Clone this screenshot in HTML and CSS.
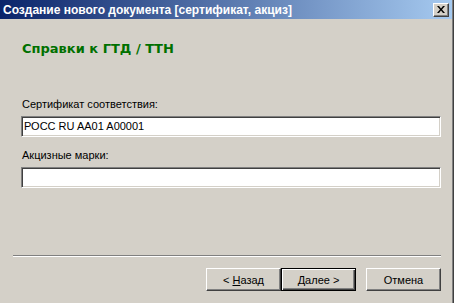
FILE: index.html
```html
<!DOCTYPE html>
<html lang="ru">
<head>
  <meta charset="UTF-8">
  <title>Создание нового документа</title>
  <link rel="stylesheet" href="styles.css">
</head>
<body>
  <!-- dialog window -->
  <div class="window">
    <div class="titlebar">
      <span class="title">Создание нового документа [сертификат, акциз]</span>
      <button class="close-btn" aria-label="Закрыть">
        <svg width="8" height="7" viewBox="0 0 8 7">
          <path d="M0 0h2l2 2.5 2-2.5h2l-3 3.5 3 3.5h-2l-2-2.5-2 2.5h-2l3-3.5z" fill="#000"/>
        </svg>
      </button>
    </div>

    <div class="content">
      <h1 class="page-title">Справки к ГТД / ТТН</h1>

      <div class="field">
        <label class="field-label">Сертификат соответствия:</label>
        <div class="text-input">РОСС RU AA01 A00001</div>
      </div>

      <div class="field">
        <label class="field-label">Акцизные марки:</label>
        <div class="text-input"></div>
      </div>
    </div>

    <!-- wizard buttons -->
    <div class="footer">
      <div class="separator"></div>
      <div class="buttons">
        <button class="btn">&lt; <u>Н</u>азад</button>
        <button class="btn default"><u>Д</u>алее &gt;</button>
        <button class="btn cancel">Отмена</button>
      </div>
    </div>
  </div>
</body>
</html>
```

FILE: styles.css
```css
body {
  margin: 0;
  background: #d4d0c8;
  font-family: 'Liberation Sans', Arial, sans-serif;
  font-size: 11px;
  color: #000;
}

.window {
  width: 453px;
  height: 303px;
  display: flex;
  flex-direction: column;
  background: #d4d0c8;
  border-right: 1px solid #404040;
  box-shadow: inset -1px 0 #808080;
}

.titlebar {
  height: 19px;
  margin-right: 1px;
  display: flex;
  align-items: center;
  justify-content: space-between;
  padding: 0 3px 0 3px;
  background: linear-gradient(to right, #0a246a, #a6caf0);
}

.title {
  color: #fff;
  font-weight: bold;
  font-size: 12px;
  white-space: nowrap;
}

.close-btn {
  width: 16px;
  height: 14px;
  padding: 0;
  display: flex;
  align-items: center;
  justify-content: center;
  background: #d4d0c8;
  border: 1px solid;
  border-color: #fff #404040 #404040 #fff;
  box-shadow: inset -1px -1px #808080;
}

.content {
  padding: 0 12px 0 21px;
}

.page-title {
  margin: 22px 0 0 1px;
  font-family: 'DejaVu Sans', Verdana, sans-serif;
  font-size: 13px;
  font-weight: bold;
  color: #007000;
  line-height: 16px;
}

.field-label {
  display: block;
  line-height: 13px;
  margin-left: 1px;
}

.field {
  margin-top: 41px;
}

.field + .field {
  margin-top: 12px;
}

.text-input {
  height: 21px;
  margin-top: 5px;
  box-sizing: border-box;
  background: #fff;
  border: 1px solid;
  border-color: #808080 #fff #fff #808080;
  box-shadow: inset 1px 1px #404040, inset -1px -1px #d4d0c8;
  padding: 3px 2px;
  line-height: 13px;
  white-space: nowrap;
}

.footer {
  margin-top: auto;
  padding: 0 12px 12px 13px;
}

.separator {
  height: 0;
  border-top: 1px solid #808080;
  border-bottom: 1px solid #fff;
}

.buttons {
  display: flex;
  justify-content: flex-end;
  margin-top: 11px;
}

.btn {
  width: 75px;
  height: 23px;
  padding: 0;
  font-family: inherit;
  font-size: 11px;
  color: #000;
  background: #d4d0c8;
  border: 1px solid;
  border-color: #fff #404040 #404040 #fff;
  box-shadow: inset -1px -1px #808080;
}

.btn.default {
  border: 1px solid #000;
  box-shadow: inset 1px 1px #fff, inset -1px -1px #404040, inset -2px -2px #808080;
}

.btn.cancel {
  margin-left: 10px;
}
```
